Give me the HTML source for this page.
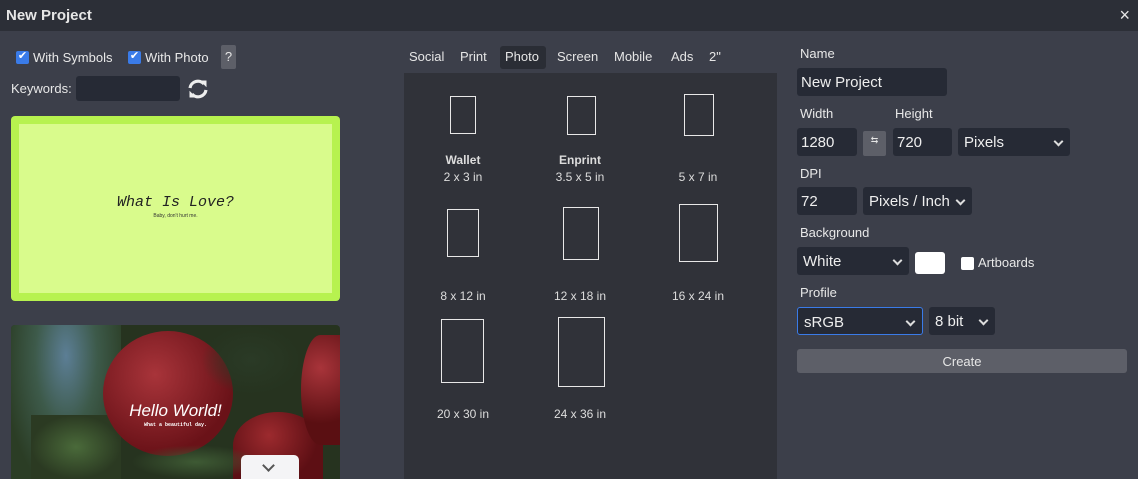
<!DOCTYPE html>
<html style="overflow:hidden;height:479px"><head><meta charset="utf-8"><style>
*{box-sizing:border-box;margin:0;padding:0}
html{overflow:hidden;width:1138px;height:479px}
body{width:1138px;height:479px;overflow:hidden;background:#3c3f4a;font-family:"Liberation Sans",sans-serif;color:#e6e6e6;position:relative;font-size:13px}
.a{position:absolute}
.tb{left:0;top:0;width:1138px;height:31px;background:#2c2f37;font-weight:bold;font-size:15px;padding:7px 6px}
.in{background:#262a35;border-radius:3px;font-size:15px;padding:6px 4px;color:#eee}
.sel{background:#262a35;border-radius:3px;font-size:15px;padding:6px 6px;color:#eee}
.sel:after{content:"";position:absolute;right:8px;top:10px;width:5px;height:5px;border-right:2px solid #ddd;border-bottom:2px solid #ddd;transform:rotate(45deg)}
.lbl{font-size:13px;color:#e8e8e8}
.cb{width:13px;height:13px;background:#3a7be8;border-radius:2px}
.r{border:1.5px solid #e8e8e8}
.c{text-align:center;font-size:12px;color:#ddd;width:120px}
.tab{font-size:13px;top:49px}
</style></head><body>
<div class="a tb">New Project<span class="a" style="right:8px;top:5px;font-weight:normal;font-size:18px">×</span></div>

<div class="a cb" style="left:16px;top:51px"></div><div class="a" style="left:16px;top:49px;color:#fff;font-size:11px;width:13px;text-align:center">✔</div>
<div class="a lbl" style="left:33px;top:50px">With Symbols</div>
<div class="a cb" style="left:128px;top:51px"></div><div class="a" style="left:128px;top:49px;color:#fff;font-size:11px;width:13px;text-align:center">✔</div>
<div class="a lbl" style="left:145px;top:50px">With Photo</div>
<div class="a" style="left:221px;top:45px;width:15px;height:24px;background:#5d5f68;border-radius:2px;text-align:center;font-size:13px;padding-top:4px">?</div>
<div class="a lbl" style="left:11px;top:81px">Keywords:</div>
<div class="a in" style="left:76px;top:76px;width:104px;height:25px"></div>
<svg class="a" style="left:187px;top:78px" width="22" height="22" viewBox="0 0 22 22" fill="none" stroke="#eee" stroke-width="3.2">
<path d="M3 10 A8 8 0 0 1 17 6"/><path d="M19 12 A8 8 0 0 1 5 16"/>
<path d="M14 3 L19 3 L19 8 Z" fill="#eee" stroke-width="1"/><path d="M8 19 L3 19 L3 14 Z" fill="#eee" stroke-width="1"/>
</svg>

<div class="a" style="left:11px;top:116px;width:329px;height:185px;background:#b7f24f;border-radius:4px"></div>
<div class="a" style="left:19px;top:124px;width:313px;height:169px;background:#d9fb8c"></div>
<div class="a" style="left:11px;top:194px;width:329px;text-align:center;font-family:'Liberation Mono',monospace;font-style:italic;font-size:15px;color:#222">What Is Love?</div>
<div class="a" style="left:11px;top:213px;width:329px;text-align:center;font-size:5px;color:#333">Baby, don't hurt me.</div>

<div class="a" style="left:11px;top:325px;width:329px;height:154px;border-radius:4px 4px 0 0;overflow:hidden;background:#26331f">
<div class="a" style="left:0;top:0;width:110px;height:154px;background:radial-gradient(ellipse at 50% 20%,#5c7e95 0%,#3d5a4a 40%,#2b3d25 80%)"></div>
<div class="a" style="left:20px;top:90px;width:90px;height:64px;background:radial-gradient(#4a6a3a,#2b3a22 70%)"></div>
<div class="a" style="left:92px;top:6px;width:130px;height:125px;border-radius:50%;background:radial-gradient(circle at 40% 35%,#a8343a,#6a1218 70%)"></div>
<div class="a" style="left:222px;top:87px;width:90px;height:67px;border-radius:50% 50% 0 0;background:radial-gradient(circle at 40% 35%,#9c2a2e,#5d0f14 70%)"></div>
<div class="a" style="left:290px;top:10px;width:39px;height:110px;border-radius:50% 0 0 50%;background:radial-gradient(circle at 50% 30%,#a8343a,#5a0f12 70%)"></div>
<div class="a" style="left:190px;top:0px;width:100px;height:70px;background:radial-gradient(#2a3a26,transparent 70%)"></div>
<div class="a" style="left:120px;top:120px;width:130px;height:34px;background:radial-gradient(#3e5a34,transparent 70%)"></div>
<div class="a" style="left:0;top:76px;width:329px;text-align:center;font-style:italic;font-size:17px;color:#fff;font-weight:300">Hello World!</div>
<div class="a" style="left:0;top:97px;width:329px;text-align:center;font-family:'Liberation Mono',monospace;font-weight:bold;font-size:5px;color:#fff">What a beautiful day.</div>
</div>
<div class="a" style="left:241px;top:455px;width:58px;height:24px;background:#f4f4f6;border-radius:5px 5px 0 0"></div>
<div class="a" style="left:264px;top:461px;width:9px;height:9px;border-right:2px solid #555;border-bottom:2px solid #555;transform:rotate(45deg)"></div>

<div class="a" style="left:500px;top:46px;width:46px;height:23px;background:#2a2d35;border-radius:3px"></div>
<div class="a tab" style="left:409px">Social</div>
<div class="a tab" style="left:460px">Print</div>
<div class="a tab" style="left:505px">Photo</div>
<div class="a tab" style="left:557px">Screen</div>
<div class="a tab" style="left:614px">Mobile</div>
<div class="a tab" style="left:671px">Ads</div>
<div class="a tab" style="left:709px">2"</div>
<div class="a" style="left:404px;top:73px;width:373px;height:406px;background:#303239"></div>

<div class="a r" style="left:450px;top:96px;width:26px;height:38px"></div>
<div class="a r" style="left:567px;top:96px;width:29px;height:39px"></div>
<div class="a r" style="left:684px;top:94px;width:30px;height:42px"></div>
<div class="a c" style="left:403px;top:153px;font-weight:bold">Wallet</div>
<div class="a c" style="left:403px;top:170px">2 x 3 in</div>
<div class="a c" style="left:520px;top:153px;font-weight:bold">Enprint</div>
<div class="a c" style="left:520px;top:170px">3.5 x 5 in</div>
<div class="a c" style="left:638px;top:170px">5 x 7 in</div>

<div class="a r" style="left:447px;top:209px;width:32px;height:48px"></div>
<div class="a r" style="left:563px;top:207px;width:36px;height:53px"></div>
<div class="a r" style="left:679px;top:204px;width:39px;height:58px"></div>
<div class="a c" style="left:403px;top:289px">8 x 12 in</div>
<div class="a c" style="left:520px;top:289px">12 x 18 in</div>
<div class="a c" style="left:638px;top:289px">16 x 24 in</div>

<div class="a r" style="left:441px;top:319px;width:43px;height:64px"></div>
<div class="a r" style="left:558px;top:317px;width:47px;height:70px"></div>
<div class="a c" style="left:403px;top:407px">20 x 30 in</div>
<div class="a c" style="left:520px;top:407px">24 x 36 in</div>

<div class="a lbl" style="left:800px;top:46px">Name</div>
<div class="a in" style="left:797px;top:68px;width:150px;height:28px">New Project</div>
<div class="a lbl" style="left:800px;top:106px">Width</div>
<div class="a lbl" style="left:895px;top:106px">Height</div>
<div class="a in" style="left:797px;top:128px;width:60px;height:28px">1280</div>
<div class="a" style="left:863px;top:131px;width:23px;height:25px;background:#5d5f68;border-radius:2px;text-align:center;font-size:9px;line-height:6px;padding-top:6px">⇆</div>
<div class="a in" style="left:893px;top:128px;width:59px;height:28px">720</div>
<div class="a sel" style="left:958px;top:128px;width:112px;height:28px">Pixels</div>
<div class="a lbl" style="left:800px;top:166px">DPI</div>
<div class="a in" style="left:797px;top:187px;width:60px;height:28px">72</div>
<div class="a sel" style="left:863px;top:187px;width:109px;height:28px;padding-right:20px">Pixels / Inch</div>
<div class="a lbl" style="left:800px;top:225px">Background</div>
<div class="a sel" style="left:797px;top:247px;width:112px;height:28px">White</div>
<div class="a" style="left:915px;top:252px;width:30px;height:22px;background:#fff;border-radius:3px"></div>
<div class="a" style="left:961px;top:257px;width:13px;height:13px;background:#fff;border-radius:2px"></div>
<div class="a lbl" style="left:978px;top:255px">Artboards</div>
<div class="a lbl" style="left:800px;top:285px">Profile</div>
<div class="a sel" style="left:797px;top:307px;width:126px;height:28px;border:1px solid #3a7be8">sRGB</div>
<div class="a sel" style="left:929px;top:307px;width:66px;height:28px">8 bit</div>
<div class="a" style="left:797px;top:349px;width:330px;height:24px;background:#5d5f68;border-radius:3px;text-align:center;font-size:13px;padding-top:5px">Create</div>
</body></html>
